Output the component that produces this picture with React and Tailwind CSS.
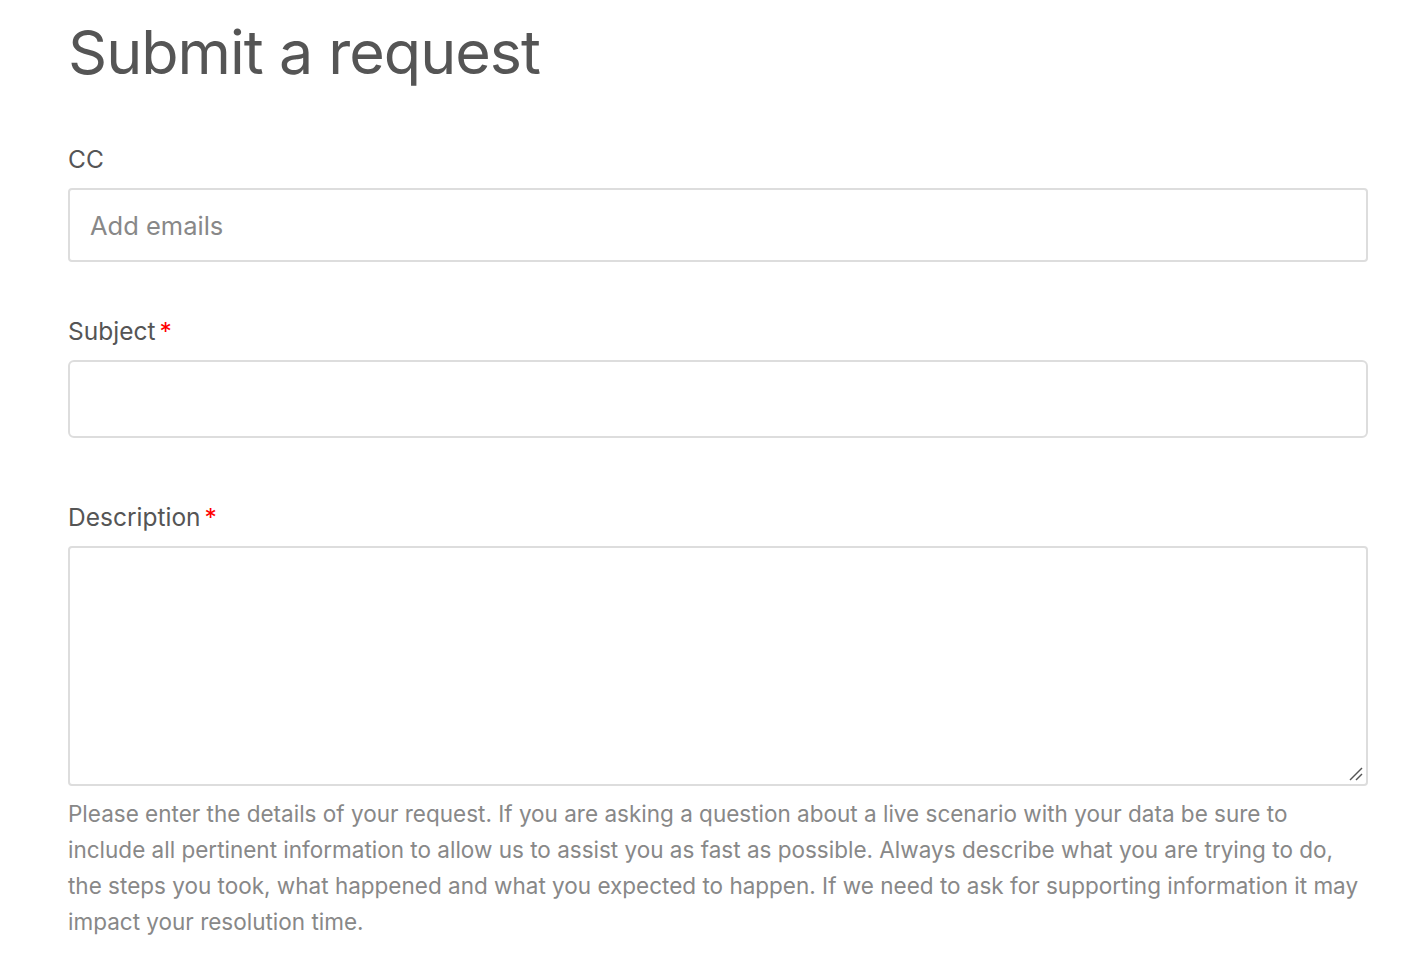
export default function App() {
  const font = { fontFamily: 'Inter, "Noto Sans", sans-serif' };
  return (
    <div className="min-h-screen bg-white" style={font}>
      <div className="pl-[68px] w-[1368px]">
        <h1 className="text-[61px] leading-[76px] pt-[14px] text-[#555555] font-normal tracking-[-1px]">
          Submit a request
        </h1>
        <div className="mt-[54px]">
          <label className="block text-[24.5px] leading-[30px] text-[#555555]">CC</label>
          <div className="mt-[14px] h-[74px] w-[1300px] rounded-[4px] border-2 border-[#dddddd] flex items-center px-[20px]">
            <span className="text-[25.5px] text-[#888888] pt-[2px]">Add emails</span>
          </div>
        </div>
        <div className="mt-[54px]">
          <label className="block text-[24.5px] leading-[30px] text-[#555555]">
            Subject<span className="text-[#ff0000] ml-[4px]">*</span>
          </label>
          <div className="mt-[14px] h-[78px] w-[1300px] rounded-[6px] border-2 border-[#dddddd]" />
        </div>
        <div className="mt-[64px]">
          <label className="block text-[24.5px] leading-[30px] text-[#555555]">
            Description<span className="text-[#ff0000] ml-[4px]">*</span>
          </label>
          <div className="relative mt-[14px] h-[240px] w-[1300px] rounded-[4px] border-2 border-[#dddddd]">
            <svg className="absolute right-[2px] bottom-[2px]" width="16" height="16" viewBox="0 0 16 16">
              <path d="M2 14 L14 2" stroke="#555" strokeWidth="1.5" />
              <path d="M8 14 L14 8" stroke="#555" strokeWidth="1.5" />
            </svg>
          </div>
          <p className="mt-[10px] w-[1300px] text-[22.5px] leading-[36px] text-[#888888]">
            Please enter the details of your request. If you are asking a question about a live scenario with your data be sure to include all pertinent information to allow us to assist you as fast as possible. Always describe what you are trying to do, the steps you took, what happened and what you expected to happen. If we need to ask for supporting information it may impact your resolution time.
          </p>
        </div>
      </div>
    </div>
  );
}
